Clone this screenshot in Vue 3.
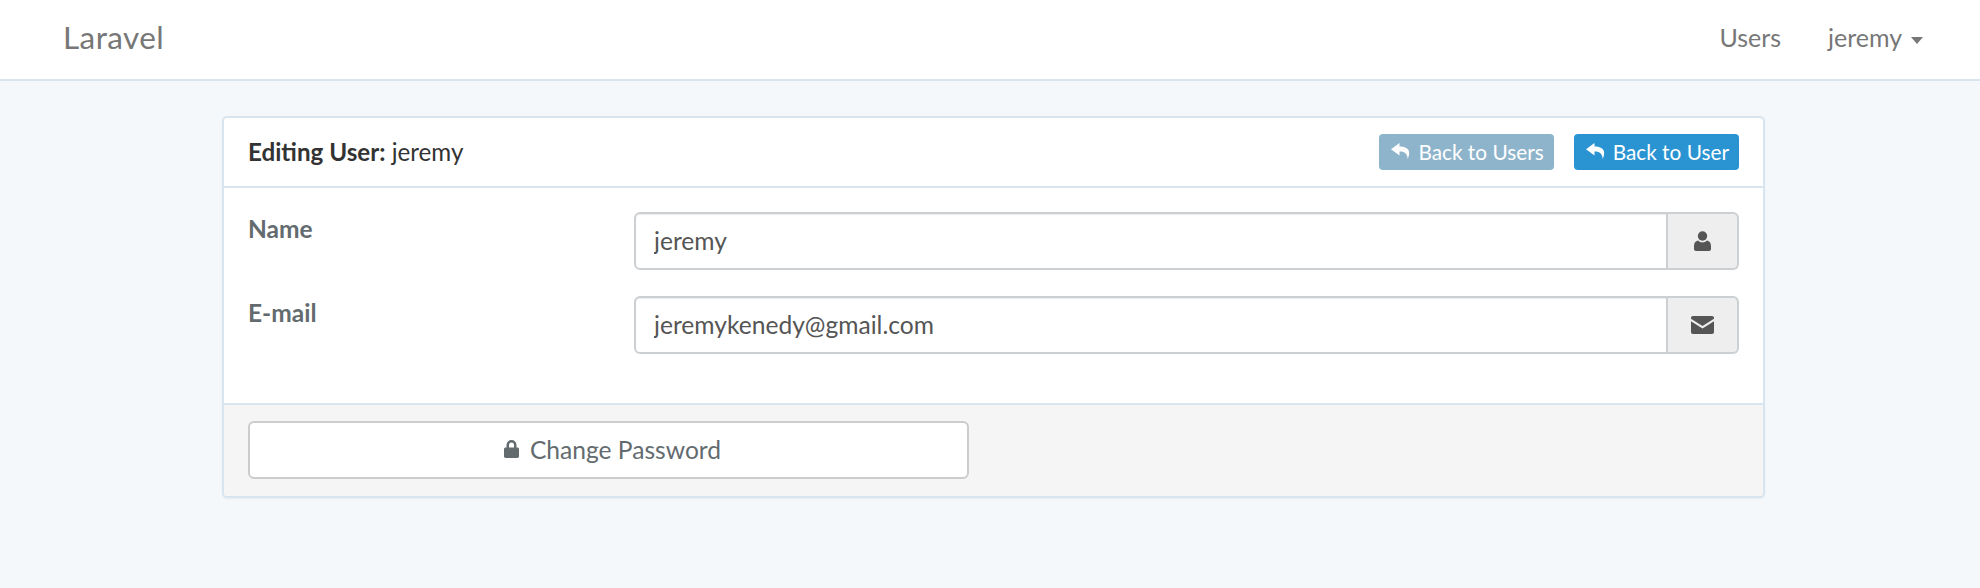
<script setup>
const fields = [
  { label: 'Name', value: 'jeremy', icon: 'user' },
  { label: 'E-mail', value: 'jeremykenedy@gmail.com', icon: 'envelope' }
]
</script>

<template>
  <div class="page">
    <nav class="navbar">
      <a class="brand">Laravel</a>
      <div class="nav-links">
        <a>Users</a>
        <a class="dropdown">jeremy <span class="caret"></span></a>
      </div>
    </nav>

    <main class="panel">
      <div class="panel-heading">
        <div class="title"><strong>Editing User:</strong> jeremy</div>
        <div class="actions">
          <a class="btn btn-muted">
            <svg class="reply" viewBox="0 0 20 16"><path d="M8.5 0 0 6.2l8.5 6.3V8.6c5-.2 7.6 1.6 8.3 7.4 2.6-5.800 2.500-12.200-8.300-12.400z" /></svg>
            Back to Users
          </a>
          <a class="btn btn-primary">
            <svg class="reply" viewBox="0 0 20 16"><path d="M8.5 0 0 6.2l8.5 6.3V8.6c5-.2 7.6 1.6 8.3 7.4 2.6-5.800 2.500-12.200-8.300-12.400z" /></svg>
            Back to User
          </a>
        </div>
      </div>

      <div class="panel-body">
        <div v-for="f in fields" :key="f.label" class="form-row">
          <label>{{ f.label }}</label>
          <div class="input-group">
            <input type="text" :value="f.value" readonly />
            <span class="addon">
              <svg v-if="f.icon === 'user'" class="icon-user" viewBox="0 0 17 20">
                <circle cx="8.500" cy="5" r="4.700" />
                <path d="M4 9.500c1.200 1.300 2.800 2 4.500 2s3.300-.7 4.500-2c2.600.5 4 2.500 4 5.500v3c0 1.200-.8 2-2 2H2c-1.200 0-2-.8-2-2v-3c0-3 1.400-5 4-5.500z" />
              </svg>
              <svg v-else class="icon-envelope" viewBox="0 0 23 18">
                <path d="M2 0h19c1.200 0 2 .8 2 2v.8L11.500 10 0 2.800V2C0 .8.800 0 2 0z" />
                <path d="M0 5.300 11.500 12.500 23 5.300V16c0 1.200-.8 2-2 2H2c-1.200 0-2-.8-2-2z" />
              </svg>
            </span>
          </div>
        </div>
      </div>

      <div class="panel-footer">
        <a class="btn-default">
          <svg class="icon-lock" viewBox="0 0 15 18">
            <path d="M2.500 7.500V5a5 5 0 0 1 10 0v2.500h.8c1 0 1.700.7 1.700 1.700v7.100c0 1-.7 1.700-1.700 1.700H1.700C.7 18 0 17.300 0 16.300V9.200c0-1 .7-1.700 1.700-1.700zm2.500 0h5V5a2.500 2.500 0 0 0-5 0z" />
          </svg>
          Change Password
        </a>
      </div>
    </main>
  </div>
</template>

<style>
body {
  margin: 0;
  background: #f5f8fa;
}
</style>

<style scoped>
.page {
  height: 588px;
  background: #f5f8fa;
  font-family: Lato, "Open Sans", sans-serif;
  color: #636b6f;
  overflow: hidden;
}

.navbar {
  height: 73px;
  box-sizing: content-box;
  background: #fff;
  border-bottom: 2px solid #d9e5ee;
  display: flex;
  justify-content: space-between;
  align-items: center;
  padding: 0 57px 6px 63px;
}

.brand {
  font-size: 31.5px;
  letter-spacing: 0.4px;
  color: #777;
}

.nav-links {
  display: flex;
  gap: 47px;
  font-size: 25px;
  color: #777;
}

.caret {
  display: inline-block;
  margin-left: 3px;
  vertical-align: middle;
  border-top: 7px solid #777;
  border-left: 6px solid transparent;
  border-right: 6px solid transparent;
}

.panel {
  width: 1543px;
  box-sizing: border-box;
  margin: 35px 0 0 222px;
  background: #fff;
  border: 2px solid #d9e5ee;
  border-radius: 5px;
  box-shadow: 0 1px 2px rgba(0, 0, 0, 0.05);
  overflow: hidden;
}

.panel-heading {
  height: 70px;
  box-sizing: border-box;
  border-bottom: 2px solid #d9e5ee;
  display: flex;
  justify-content: space-between;
  align-items: center;
  padding: 0 24px 1px 24px;
  font-size: 24.2px;
  color: #333;
}

.title strong {
  font-weight: 700;
}

.actions {
  display: flex;
  gap: 20px;
}

.btn {
  height: 36px;
  box-sizing: border-box;
  display: flex;
  align-items: center;
  gap: 7px;
  padding: 0 10px 1px 12px;
  border-radius: 4px;
  color: #fff;
  font-size: 20.8px;
}

.btn-muted {
  background: #8eb4cb;
}

.btn-primary {
  background: #2a94d2;
}

.reply {
  width: 20px;
  height: 16px;
  fill: #fff;
}

.panel-body {
  padding: 24px 24px 49px;
}

.form-row {
  display: flex;
  margin-bottom: 26px;
}

.form-row:last-child {
  margin-bottom: 0;
}

label {
  width: 386px;
  flex: none;
  font-size: 24.5px;
  font-weight: 700;
  padding-top: 2px;
}

.input-group {
  flex: 1;
  height: 58px;
  display: flex;
}

input {
  flex: 1;
  min-width: 0;
  box-sizing: border-box;
  border: 2px solid #ccd0d2;
  border-radius: 6px 0 0 6px;
  box-shadow: inset 0 1px 1px rgba(0, 0, 0, 0.08);
  padding: 0 18px 2px;
  font-family: inherit;
  font-size: 24.6px;
  color: #555;
  outline: none;
}

.addon {
  width: 71px;
  box-sizing: border-box;
  display: flex;
  align-items: center;
  justify-content: center;
  background: #eee;
  border: 2px solid #ccd0d2;
  border-left: 0;
  border-radius: 0 6px 6px 0;
}

.icon-user {
  width: 17px;
  height: 20px;
  fill: #555;
}

.icon-envelope {
  width: 23px;
  height: 18px;
  fill: #555;
}

.panel-footer {
  background: #f5f5f5;
  border-top: 2px solid #d9e5ee;
  padding: 16px 24px 17px;
}

.btn-default {
  width: 721px;
  height: 58px;
  box-sizing: border-box;
  display: flex;
  align-items: center;
  justify-content: center;
  gap: 11px;
  padding: 0 0 2px 8px;
  background: #fff;
  border: 2px solid #ccc;
  border-radius: 6px;
  font-size: 24.6px;
  color: #636b6f;
}

.icon-lock {
  width: 15px;
  height: 18px;
  fill: #636b6f;
}
</style>
